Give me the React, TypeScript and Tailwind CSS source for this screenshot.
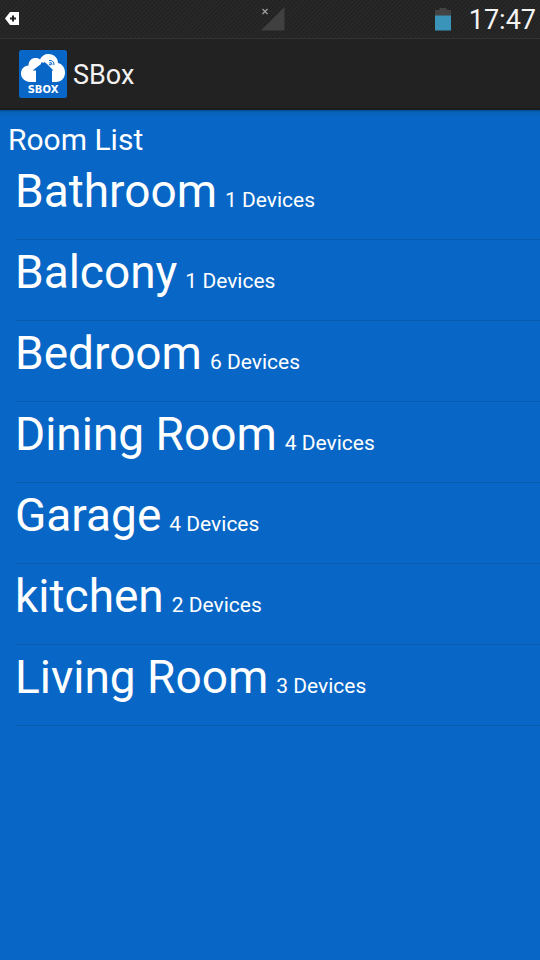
type Room = { name: string; devices: number };

const rooms: Room[] = [
  { name: "Bathroom", devices: 1 },
  { name: "Balcony", devices: 1 },
  { name: "Bedroom", devices: 6 },
  { name: "Dining Room", devices: 4 },
  { name: "Garage", devices: 4 },
  { name: "kitchen", devices: 2 },
  { name: "Living Room", devices: 3 },
];

function TagIcon() {
  return (
    <svg className="h-4 w-4" viewBox="0 0 16 16" aria-hidden="true">
      <path d="M0 7.5 5 1H14V14H5Z" fill="#fff" />
      <path d="M8 4.5v6M5 7.500h6" stroke="#222" strokeWidth="2" />
    </svg>
  );
}

function SignalIcon() {
  return (
    <svg className="h-6 w-6" viewBox="0 0 24 24" aria-hidden="true">
      <path d="M23.5 0v23.500H0Z" fill="#404040" />
      <path d="m1.500 2 5 5M6.500 2l-5 5" stroke="#a0a0a0" strokeWidth="1.2" />
    </svg>
  );
}

function BatteryIcon() {
  return (
    <svg className="h-6 w-4" viewBox="0 0 16 24" aria-hidden="true">
      <path d="M0 3H4.500V1H11.500V3H16V9H0Z" fill="#434343" />
      <path d="M0 8.500h16v15H0Z" fill="#3a93b8" />
    </svg>
  );
}

function SBoxLogo() {
  return (
    <svg className="h-12 w-12" viewBox="0 0 48 48" role="img" aria-label="SBox logo">
      <rect width="48" height="48" rx="2.500" fill="#0867c6" />
      <path
        d="M11 32C5.500 31.500 2 28 2 23.500 2 19 5 16 9.500 15.500 9.500 10.500 13 7.800 17 8 18.500 8 20 8.500 21 9.500 22.500 6 25.500 4 29.500 4 35 4 39 8 39 13 43.500 14 46 18 46 22.500 46 28 42.500 32 37 32Z"
        fill="#fff"
      />
      <path
        d="M13.500 20.500 22 14V12.500h2V13l1.500-1 2.500 2 6.500 6.500H33V33H17V20.500Z"
        fill="#0867c6"
      />
      <g fill="none" stroke="#0867c6" strokeWidth="1">
        <path d="M30.500 12.500q2.500-.5 2.500 2.500" />
        <path d="M30 10.500q5-.5 5 4.500" />
      </g>
      <circle cx="31" cy="14.500" r=".9" fill="#0867c6" />
      <text
        x="24"
        y="43"
        textAnchor="middle"
        fill="#fff"
        className="font-['DejaVu_Sans',sans-serif] text-[10px] font-bold"
      >
        SBOX
      </text>
    </svg>
  );
}

function StatusBar() {
  return (
    <div className="grid h-[39px] grid-cols-3 items-center border-b border-[#323232] bg-[repeating-linear-gradient(135deg,#202020_0px,#262626_1px,#2a2a2a_2px,#202020_3px)] pr-1 pl-[5px]">
      <TagIcon />
      <div className="flex justify-center pl-1">
        <SignalIcon />
      </div>
      <div className="flex items-center justify-end gap-[18px]">
        <BatteryIcon />
        <time className="pt-0.5 text-[27px] leading-8 text-[#f4f4f4]">17:47</time>
      </div>
    </div>
  );
}

export default function App() {
  return (
    <div className="flex min-h-screen flex-col bg-[#0867c6] font-[Roboto,sans-serif] text-white">
      <StatusBar />
      <header className="flex h-[71px] items-center gap-1.5 border-b-2 border-[#1b1b1b] bg-[#222222] px-[19px]">
        <SBoxLogo />
        <h1 className="pt-0.5 text-[27px] leading-8 text-[#f2f2f2]">SBox</h1>
      </header>
      <main className="flex-1 bg-[linear-gradient(to_bottom,#074c8e,#0862ba_2px,#0867c6_8px)]">
        <h2 className="px-2 pt-3 pb-0.5 text-[30px] leading-[35px]">Room List</h2>
        <ul className="pl-[15px]">
          {rooms.map((room) => (
            <li
              key={room.name}
              className="flex items-baseline gap-2 border-b border-[#085bad] pt-1.5 pb-[21px]"
            >
              <span className="text-[46px] leading-[53px]">{room.name}</span>
              <span className="text-[21px] leading-6">{room.devices} Devices</span>
            </li>
          ))}
        </ul>
      </main>
    </div>
  );
}
